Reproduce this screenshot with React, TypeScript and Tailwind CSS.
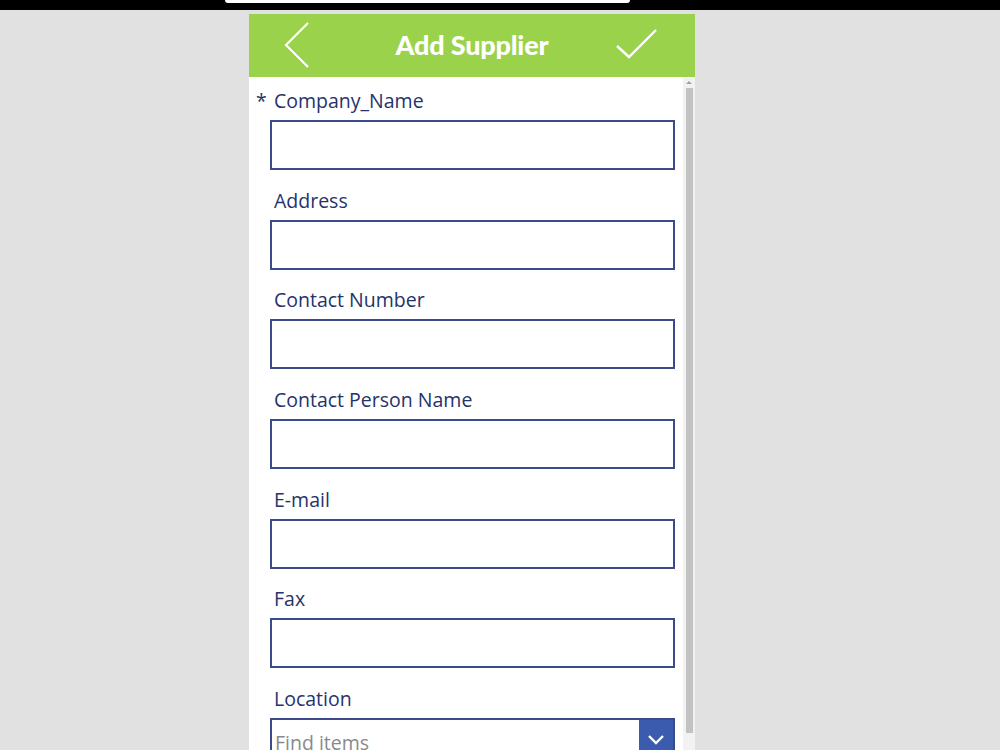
import { useState } from 'react'

const fields = [
  { label: 'Address', h: 'h-[50px]' },
  { label: 'Contact Number', h: 'h-[49px]' },
  { label: 'Contact Person Name', h: 'h-[50px]' },
  { label: 'E-mail', h: 'h-[50px]' },
  { label: 'Fax', h: 'h-[49px]' },
]

function Field({ label, h, required }: { label: string; h: string; required?: boolean }) {
  const [value, setValue] = useState('')
  return (
    <div>
      <div className={`flex items-end pb-[7px] pl-[7px] text-[19.5px] leading-[24px] text-[#25336b] ${h}`}>
        <span className="w-[18px]">{required ? '*' : ''}</span>
        <span>{label}</span>
      </div>
      <input
        value={value}
        onChange={(e) => setValue(e.target.value)}
        className="ml-[21px] block h-[50px] w-[405px] border-2 border-[#3a4a8a] bg-white px-2 text-[18px] outline-none"
      />
    </div>
  )
}

export default function App() {
  return (
    <div className="h-[750px] overflow-hidden bg-[#e1e1e1] font-['Open_Sans',sans-serif]">
      <div className="h-[10px] bg-black">
        <div className="ml-[225px] h-[3px] w-[405px] rounded-b-[3px] bg-white" />
      </div>

      <div className="ml-[249px] mt-[4px] w-[446px]">
        {/* title bar */}
        <header className="grid h-[63px] grid-cols-[1fr_auto_1fr] items-center bg-[#9bd24b] text-white">
          <button className="ml-[34px] h-[63px] w-[28px]">
            <svg width="28" height="63" viewBox="0 0 28 63" fill="none">
              <path d="M25 9 L3 31 L25 53" stroke="white" strokeWidth="2.2" />
            </svg>
          </button>
          <h1 className="font-['Lato',sans-serif] text-[27px] font-black tracking-[-0.2px]">Add Supplier</h1>
          <button className="mr-[36px] h-[63px] w-[44px] justify-self-end">
            <svg width="44" height="63" viewBox="0 0 44 63" fill="none">
              <path d="M2 32 L14 43 L41 16" stroke="white" strokeWidth="2.4" />
            </svg>
          </button>
        </header>

        <div className="flex h-[673px] bg-white">
          <div className="flex-1">
            <Field label="Company_Name" h="h-[43px]" required />
            {fields.map((f) => (
              <Field key={f.label} label={f.label} h={f.h} />
            ))}
            <div>
              <div className="flex h-[50px] items-end pb-[7px] pl-[25px] text-[19.5px] leading-[24px] text-[#25336b]">
                Location
              </div>
              <div className="ml-[21px] flex h-[50px] w-[405px] border-2 border-[#3a4a8a]">
                <input
                  placeholder="Find items"
                  className="min-w-0 flex-1 px-[3px] text-[19.5px] text-[#555] placeholder-[#8a8a8a] outline-none"
                />
                <div className="flex w-[34px] items-start justify-center bg-[#3b5bae] pt-[14px]">
                  <svg width="18" height="12" viewBox="0 0 18 12" fill="none">
                    <path d="M2 2 L9 9 L16 2" stroke="white" strokeWidth="2.4" />
                  </svg>
                </div>
              </div>
            </div>
          </div>

          {/* scrollbar */}
          <div className="w-[12px] bg-[#f2f2f2]">
            <div className="mx-auto mt-[4px] h-0 w-0 border-x-[3px] border-b-[3px] border-x-transparent border-b-[#a0a0a0]" />
            <div className="ml-[3px] mt-[4px] h-[645px] w-[7px] bg-[#c2c2c2]" />
          </div>
        </div>
      </div>
    </div>
  )
}
